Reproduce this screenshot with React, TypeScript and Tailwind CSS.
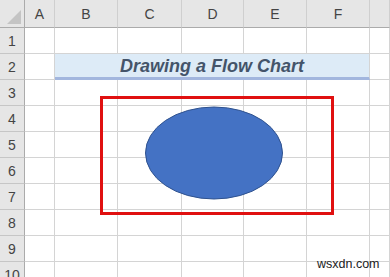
import React from "react";

const cols = ["A", "B", "C", "D", "E", "F", ""];
const rows = [1, 2, 3, 4, 5, 6, 7, 8, 9, 10];

export default function App() {
  return (
    <div
      className="relative w-[390px] h-[277px] overflow-hidden bg-white"
      style={{ fontFamily: '"Liberation Sans", Arial, sans-serif' }}
    >
      <div className="grid grid-cols-[25px_30px_63px_64px_62px_63px_63px_1fr] grid-rows-[28px_repeat(10,26px)]">
        {/* corner */}
        <div className="relative bg-[#e6e6e6] border-r border-b border-[#ababab]">
          <div className="absolute right-[3px] bottom-[3px] w-0 h-0 border-l-[14px] border-l-transparent border-b-[14px] border-b-[#c4c4c4]" />
        </div>
        {cols.map((c, i) => (
          <div
            key={"h" + i}
            className="flex items-center justify-center bg-[#e6e6e6] border-r border-b border-r-[#cfcfcf] border-b-[#ababab] text-[14px] text-[#444] pt-[2px]"
          >
            {c}
          </div>
        ))}
        {rows.map((r) => (
          <React.Fragment key={"r" + r}>
            <div className="flex items-center justify-center bg-[#e6e6e6] border-r border-b border-r-[#ababab] border-b-[#c6c6c6] text-[14px] text-[#444] pt-[2px]">
              {r}
            </div>
            {r === 2 ? (
              <>
                <div className="border-r border-b border-[#d4d4d4]" />
                <div className="col-span-5 flex items-center justify-center bg-[#ddebf7] border-b-[3px] border-b-[#a2b6de] border-r border-r-[#d4d4d4]">
                  <span className="text-[18px] font-bold italic text-[#44546a] leading-none mt-[1px]">
                    Drawing a Flow Chart
                  </span>
                </div>
                <div className="border-r border-b border-[#d4d4d4]" />
              </>
            ) : (
              cols.map((_, i) => (
                <div key={"c" + r + i} className="border-r border-b border-[#d4d4d4]" />
              ))
            )}
          </React.Fragment>
        ))}
      </div>

      {/* red rectangle */}
      <div className="absolute left-[100px] top-[96px] w-[234px] h-[119px] border-[3px] border-[#e01010]" />

      {/* ellipse */}
      <svg className="absolute left-[144px] top-[106px]" width="140" height="95" viewBox="0 0 140 95">
        <ellipse cx="70" cy="47" rx="68.5" ry="46" fill="#4472c4" stroke="#2f528f" strokeWidth="1" />
      </svg>

      {/* watermark */}
      <div className="absolute left-[317px] top-[258px] text-[12.5px] text-[#222] leading-none">
        wsxdn.com
      </div>
    </div>
  );
}
